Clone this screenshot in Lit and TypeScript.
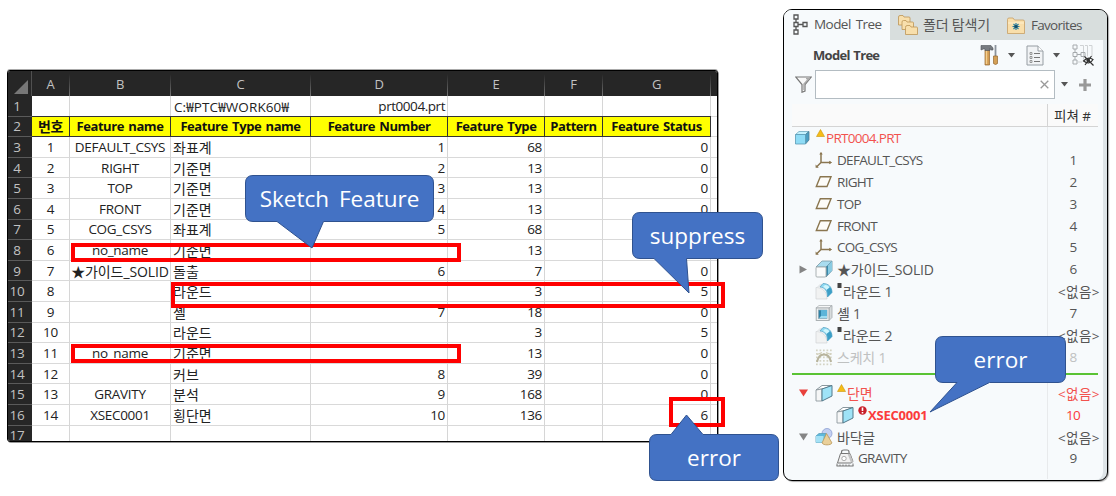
import { LitElement, css, html, nothing, svg } from "lit";
import { customElement, property } from "lit/decorators.js";
import { classMap } from "lit/directives/class-map.js";

const COLUMNS = ["A", "B", "C", "D", "E", "F", "G"];

const HEADINGS = [
  "번호",
  "Feature name",
  "Feature Type name",
  "Feature Number",
  "Feature Type",
  "Pattern",
  "Feature Status",
];

const ROWS = [
  ["1", "DEFAULT_CSYS", "좌표계", "1", "68", "", "0"],
  ["2", "RIGHT", "기준면", "2", "13", "", "0"],
  ["3", "TOP", "기준면", "3", "13", "", "0"],
  ["4", "FRONT", "기준면", "4", "13", "", "0"],
  ["5", "COG_CSYS", "좌표계", "5", "68", "", "0"],
  ["6", "no_name", "기준면", "", "13", "", "0"],
  ["7", "★가이드_SOLID", "돌출", "6", "7", "", "0"],
  ["8", "", "라운드", "", "3", "", "5"],
  ["9", "", "셸", "7", "18", "", "0"],
  ["10", "", "라운드", "", "3", "", "5"],
  ["11", "no_name", "기준면", "", "13", "", "0"],
  ["12", "", "커브", "8", "39", "", "0"],
  ["13", "GRAVITY", "분석", "9", "168", "", "0"],
  ["14", "XSEC0001", "횡단면", "10", "136", "", "6"],
];

const isKorean = (text: string) => /[가-힣]/.test(text);

interface TreeNode {
  icon: string;
  label: string;
  value: string;
  level: number;
  arrow?: "right" | "down";
  badge?: "warn" | "square" | "fail";
  tone?: "red" | "strong" | "faint";
}

const ABOVE: TreeNode[] = [
  { icon: "part", label: "PRT0004.PRT", value: "", level: 0, badge: "warn", tone: "red" },
  { icon: "csys", label: "DEFAULT_CSYS", value: "1", level: 1 },
  { icon: "plane", label: "RIGHT", value: "2", level: 1 },
  { icon: "plane", label: "TOP", value: "3", level: 1 },
  { icon: "plane", label: "FRONT", value: "4", level: 1 },
  { icon: "csys", label: "COG_CSYS", value: "5", level: 1 },
  { icon: "extrude", label: "★가이드_SOLID", value: "6", level: 1, arrow: "right" },
  { icon: "round", label: "라운드 1", value: "<없음>", level: 1, badge: "square" },
  { icon: "shell", label: "셸 1", value: "7", level: 1 },
  { icon: "round", label: "라운드 2", value: "<없음>", level: 1, badge: "square" },
  { icon: "sketch", label: "스케치 1", value: "8", level: 1, tone: "faint" },
];

const BELOW: TreeNode[] = [
  { icon: "section", label: "단면", value: "<없음>", level: 1, arrow: "down", badge: "warn", tone: "red" },
  { icon: "section", label: "XSEC0001", value: "10", level: 2, badge: "fail", tone: "strong" },
  { icon: "footer", label: "바닥글", value: "<없음>", level: 1, arrow: "down" },
  { icon: "gravity", label: "GRAVITY", value: "9", level: 2 },
];

// All tree icons are drawn on an 18x18 grid
const ICONS: Record<string, unknown> = {
  part: svg`
    <path d="M1.500 5.500 5 2.500h10L11.500 5.500z" fill="#c4f1fd" stroke="#6fa9bf" stroke-width=".8"/>
    <path d="M11.500 5.500l3.500-3v8.500l-3.500 4z" fill="#4a9ec2" stroke="#4a7f96" stroke-width=".8"/>
    <path d="M1.500 5.500h10V15h-10z" fill="#8fdcf6" stroke="#5b9ab5" stroke-width=".8"/>`,
  csys: svg`
    <path d="M6 2v9.500H16M6 11.500 1.500 16" fill="none" stroke="#8a7650" stroke-width="1.500"/>
    <path d="M4.300 3.500 6 .7l1.700 2.800zM14.200 9.700l3 1.800-3 1.800zM.6 13.600v3.200h3.200z" fill="#8a7650"/>`,
  plane: svg`<path d="M5.300 3.800H16l-4 9.700H1.300z" fill="#fdfcf8" stroke="#8a7650" stroke-width="1.400"/>`,
  extrude: svg`
    <path d="M1 7 7 1h10l-6 6z" fill="#a9dcef" stroke="#7b99a5" stroke-width=".8"/>
    <path d="M11 7l6-6v9.500L11 17z" fill="#398cae" stroke="#6b8f9f" stroke-width=".8"/>
    <path d="M13 5.200 17 1v9.500l-4 4z" fill="#8acbe2"/>
    <rect x="1" y="7" width="10" height="10" rx="1" fill="#fafbfb" stroke="#a2a9ac" stroke-width=".9"/>`,
  round: svg`
    <path d="M1 5.500C7 5.500 12 9 12 17H1z" fill="#f1f2f2" stroke="#d0d3d5" stroke-width=".7"/>
    <path d="M1.500 5.300 5 2h3l3 3z" fill="#e5e8ea"/>
    <path d="M5 5 8 1.500C13.500 1.500 17 5 17 10.500L12.500 15C12.500 9 10 5.500 5 5z" fill="#8fdaf3" stroke="#5da5c4" stroke-width=".8"/>
    <path d="M11.500 8 15 5c1.300 1.500 2 3.500 2 5.500L12.500 15c0-3 0-5-1-7z" fill="#3c9ec6"/>
    <path d="M8 5 10 3c2 .3 3.500 1.200 4.300 2.500L11.500 7.800Q10.300 5.800 8 5z" fill="#d0f6fd"/>`,
  shell: svg`
    <path d="M1 4 4 1.500h13L14 4z" fill="#f6f7f7" stroke="#b0b5b7" stroke-width=".8"/>
    <path d="M14 4l3-2.500v12l-3 3z" fill="#d8dcdd" stroke="#a4aaad" stroke-width=".8"/>
    <rect x="1.200" y="4" width="12.800" height="12.500" fill="#eef0f1" stroke="#a4aaad" stroke-width=".9"/>
    <rect x="3.500" y="6" width="8.500" height="8.500" fill="#2f83a8" stroke="#8ba4af" stroke-width=".7"/>
    <path d="M6 6h6v6H6z" fill="#5cb4d8"/>
    <path d="M4 14.300 6 12h6v2.300z" fill="#9edcf1"/>`,
  sketch: svg`
    <g fill="#d4d3c4">${[1, 4.500, 8, 11.500, 15].map((x) => [1.500, 5, 8.500, 12, 15.500].map((y) => svg`<rect x=${x} y=${y} width="1.700" height="1.700"/>`))}</g>
    <path d="M2 14C4 4 14 4 16 14" fill="none" stroke="#b8b49d" stroke-width="2"/>
    <path d="M2 6.500 7 4.500M11 4.500l5 2" stroke="#d2cfb9" stroke-width="1.300"/>`,
  section: svg`
    <path d="M1 6 7 1.500h10L9 4.500z" fill="#fff" stroke="#7c8b92" stroke-width=".9"/>
    <path d="M1 6l6-1v12H1z" fill="#f5f6f6" stroke="#8f9a9f" stroke-width=".9"/>
    <path d="M7 5 17 1.500V12L7 17z" fill="#9fe3f7" stroke="#53798a" stroke-width="1"/>`,
  footer: svg`
    <circle cx="12" cy="5.500" r="5" fill="#c3d0f2" stroke="#8c9fd2" stroke-width=".8"/>
    <path d="M1 8l3-2.500h7V12l-3 2.500H1z" fill="#5fb9dc" stroke="#5d9fba" stroke-width=".8"/>
    <path d="M1 8h7.500v6.500H1z" fill="#a4e1f5"/>
    <path d="M11.500 5.500 17 15c-1.500 2.500-8.500 2.500-10 0z" fill="#ead09a" stroke="#b99859" stroke-width=".8"/>`,
  gravity: svg`
    <path d="M5.500 5V3Q5.500 1 8 1h3q2 0 2 2v2" fill="none" stroke="#777" stroke-width="1.200"/>
    <path d="M4.500 4.500H14L17 12.500 15 14H1.500z" fill="#f2f2f2" stroke="#777" stroke-width="1"/>
    <path d="M11.500 4.800H14L17 12.500 15 13.800z" fill="#c4c4c4"/>
    <circle cx="8" cy="9.500" r="2.200" fill="#fff" stroke="#999" stroke-width=".8"/>
    <path d="M.5 17h17M1 14.500V17M4 15.500V17M7 15.500V17M10 15.500V17M13 15.500V17M17 14.500V17" stroke="#777" stroke-width="1"/>`,
};

@customElement("feature-sheet")
class FeatureSheet extends LitElement {
  renderCell(text: string, index: number) {
    return html`<div class=${classMap({ cell: true, center: index < 2, right: index > 2, ko: isKorean(text) })}>${text}</div>`;
  }

  render() {
    return html`
      <div class="sheet">
        <div class="corner">
          <svg width="14" height="14" viewBox="0 0 14 14"><path d="M14 0v14H0z" fill="#777" /></svg>
        </div>
        ${COLUMNS.map((name) => html`<div class="col-head">${name}</div>`)}
        <div class="col-head last"></div>

        <div class="row-head">1</div>
        <div class="cell"></div>
        <div class="cell"></div>
        <div class="cell path">C:₩PTC₩WORK60₩</div>
        <div class="cell right file">prt0004.prt</div>
        <div class="cell"></div>
        <div class="cell"></div>
        <div class="cell"></div>
        <div class="cell last"></div>

        <div class="row-head">2</div>
        ${HEADINGS.map((text) => html`<div class=${classMap({ cell: true, heading: true, ko: isKorean(text) })}>${text}</div>`)}
        <div class="cell last"></div>

        ${ROWS.map(
          (row, i) => html`
            <div class="row-head">${i + 3}</div>
            ${row.map((text, index) => this.renderCell(text, index))}
            <div class="cell last"></div>
          `
        )}

        <div class="row-head">17</div>
        ${COLUMNS.map(() => html`<div class="cell"></div>`)}
        <div class="cell last"></div>
      </div>
    `;
  }

  static styles = css`
    :host {
      display: block;
    }
    .sheet {
      box-sizing: border-box;
      width: 711px;
      height: 372px;
      overflow: hidden;
      border: 1px solid #000;
      border-radius: 3px;
      box-shadow: 1px 1px 0 #999, 0 -1px 0 #aaa;
      background: #fff;
      display: grid;
      grid-template-columns: 24px 38px 101px 140px 137px 97px 58px 108px 1fr;
      grid-template-rows: 25px repeat(17, 20.6px);
      font: 13.5px "Open Sans", "Noto Sans CJK KR", sans-serif;
      letter-spacing: -0.3px;
      color: #222;
    }
    .corner,
    .col-head,
    .row-head {
      background: #262626;
      color: #c2c2c2;
      display: flex;
      align-items: center;
      justify-content: center;
    }
    .corner {
      align-items: flex-end;
      justify-content: flex-end;
      padding: 0 3px 2px 0;
      border-right: 1px solid #505050;
    }
    .col-head {
      font-size: 13px;
      border-right: 1px solid #5c5c5c;
      border-image: linear-gradient(#262626 15%, #777) 1;
    }
    .row-head {
      padding-right: 6px;
      border-bottom: 1px solid #5a5a5a;
    }
    .cell {
      display: flex;
      align-items: center;
      box-sizing: border-box;
      min-width: 0;
      padding: 0 2px 0 3px;
      white-space: nowrap;
      border-right: 1px solid #d6d6d6;
      border-bottom: 1px solid #d9d9d9;
    }
    .center {
      justify-content: center;
      padding: 0;
    }
    .right {
      justify-content: flex-end;
    }
    .ko {
      font-size: 14px;
      letter-spacing: 0;
      padding-left: 2px;
    }
    .path {
      letter-spacing: 0.1px;
    }
    .file {
      letter-spacing: -0.45px;
    }
    .heading {
      justify-content: center;
      padding: 0;
      background: #ff0;
      color: #111;
      font-weight: 700;
      font-size: 13px;
      letter-spacing: -0.45px;
      word-spacing: 1.5px;
      border-color: #333;
      box-shadow: 0 -1px 0 #333;
    }
    .center.ko {
      letter-spacing: -0.1px;
      padding: 0;
    }
    .heading.ko {
      font-size: 14px;
    }
    .last {
      border-right: 0;
    }
  `;
}

@customElement("model-tree")
class ModelTree extends LitElement {
  renderBadge(kind?: string) {
    if (kind === "warn") {
      return html`<svg class="badge" width="10" height="8" viewBox="0 0 10 8">
        <path d="M4.500.5 8.500 7.500h-8z" fill="#f6bd16" stroke="#c9930c" stroke-width=".6" />
      </svg>`;
    }
    if (kind === "square") {
      return html`<svg class="badge" width="6" height="8" viewBox="0 0 6 8"><path d="M.5 1h4v5h-4z" fill="#444" /></svg>`;
    }
    if (kind === "fail") {
      return html`<svg class="badge" width="10" height="9" viewBox="0 0 10 9">
        <circle cx="4.500" cy="4.500" r="4.200" fill="#c8202a" />
        <path d="M4.500 1.500V5M4.500 6v1.500" stroke="#fff" stroke-width="1.600" />
      </svg>`;
    }
    return nothing;
  }

  renderArrow(direction?: string, red = false) {
    if (!direction) return nothing;
    const d = direction === "right" ? "M.5.5 8 4.500.5 8.500z" : "M0 1.500h9L4.500 8.500z";
    return html`<svg width="9" height="9" viewBox="0 0 9 9"><path d=${d} fill=${red ? "#e8413c" : "#858585"} /></svg>`;
  }

  renderNode(node: TreeNode) {
    const tone = node.tone ?? "plain";
    return html`
      <div class="node ${tone}">
        <div class="lead level${node.level}">${this.renderArrow(node.arrow, tone === "red")}</div>
        <svg class="icon" width="18" height="18" viewBox="0 0 18 18">${ICONS[node.icon]}</svg>
        ${this.renderBadge(node.badge)}
        <span class=${classMap({ label: true, ko: isKorean(node.label) })}>${node.label}</span>
        <span class=${classMap({ value: true, none: isKorean(node.value) })}>${node.value}</span>
      </div>
    `;
  }

  renderCaret() {
    return html`<svg class="caret" width="7" height="5" viewBox="0 0 7 5"><path d="M0 0h7L3.500 4.500z" fill="#555" /></svg>`;
  }

  render() {
    return html`
      <div class="panel">
        <div class="tabs">
          <div class="tab active">
            <svg width="15" height="21" viewBox="0 0 15 21" fill="none" stroke="#555" stroke-width="1.300">
              <path d="M1 1h4v4H1zM1 8.500h4v4H1zM1 16h4v4H1zM10 8.500h4v4h-4zM3 5v3.500M3 12.500V16M5 10.500h5" />
            </svg>
            <span>Model Tree</span>
          </div>
          <div class="tab folders">
            <svg width="20" height="20" viewBox="0 0 20 20" fill="#f8dfac" stroke="#bd9556" stroke-width=".8">
              <path d="M.5 2Q.5.5 2 .5h3l1 1.500h5q1 0 1 1V10H.5z" />
              <path d="M4 7Q4 5.500 5.500 5.500H8L9 7h5.500q1 0 1 1v6.500H4z" />
              <path d="M7.500 12.500Q7.500 10.500 9 10.500h3L13 12h5.500q1 0 1 1v6.500h-12z" />
            </svg>
            <span class="ko">폴더 탐색기</span>
          </div>
          <div class="tab favorites">
            <svg width="18" height="17" viewBox="0 0 18 17">
              <path d="M.5 2.500Q.5 1 2 1h4l1.500 2H16q1.500 0 1.500 1.500v12H.5z" fill="#f9dfab" stroke="#c6a064" stroke-width=".8" />
              <path d="M1 6h16" stroke="#fff0cd" />
              <path d="M9 6v7M5.500 9.500h7M6.500 7l5 5M11.500 7l-5 5" stroke="#277f9e" stroke-width="1.200" />
              <circle cx="9" cy="9.500" r="1.600" fill="#174d68" />
            </svg>
            <span>Favorites</span>
          </div>
        </div>

        <div class="title-bar">
          <span class="title">Model Tree</span>
          <svg width="19" height="22" viewBox="0 0 19 22">
            <path d="M5 6h4.500v15H5z" fill="#d39c52" stroke="#94662f" stroke-width=".7" />
            <path d="M6.500 6.500V20" stroke="#f4cf90" stroke-width="1.400" />
            <path d="M1 1.500h10l2 2.500v2h-2L10 4.500V6.500H5V5H3.500L1 6z" fill="#777b80" stroke="#4f5357" stroke-width=".6" />
            <path d="M15.500 1v11" stroke="#8b929b" stroke-width="1.800" />
            <path d="M13.500 12h4v7.500q-2 2-4 0z" fill="#d4a056" stroke="#94662f" stroke-width=".7" />
          </svg>
          ${this.renderCaret()}
          <svg class="list" width="18" height="21" viewBox="0 0 18 21">
            <path d="M1 1h11l5 5v14H1z" fill="#f1f3f5" stroke="#969da3" />
            <path d="M12 1v5h5" fill="#fff" stroke="#969da3" />
            <path d="M8 8.500h6M8 12.500h6M8 16.500h6" stroke="#777" />
            <path d="M4 7.500h2v2H4zM4 11.500h2v2H4zM4 15.500h2v2H4z" fill="none" stroke="#777" stroke-width=".7" />
          </svg>
          ${this.renderCaret()}
          <svg class="hide" width="22" height="22" viewBox="0 0 22 22" fill="none">
            <path d="M8 1.500h3.500v14M13 1.500h2.500v11M17 1.500h3v11M6 18h4" stroke="#cfd2d4" />
            <path d="M1 1h4v4H1zM1 8.500h4v4H1zM1 16h4v4H1zM9 8.500h4v4H9zM3 5v3.500M3 12.500V16M5 10.500h4" stroke="#a6aaad" />
            <path d="M11.500 17q4.500-5 9.500-1.500-3.500 6-9.500 1.500z" stroke="#333" stroke-width="1.200" />
            <circle cx="16.200" cy="16.200" r="1.700" fill="#333" />
            <path d="M12.500 12.500 21.500 21.500M19.500 12l-6.500 9" stroke="#333" stroke-width="1.200" />
          </svg>
        </div>

        <div class="search">
          <svg width="17" height="17" viewBox="0 0 17 17">
            <path d="M.7 1h15.600L10 8.500V15l-3 1.200V8.500z" fill="#f8f8f8" stroke="#777" stroke-width="1.200" />
            <path d="M11 2.500h3L9 8v6" fill="none" stroke="#aaa" stroke-width="1.500" />
          </svg>
          <div class="field">
            <svg width="9" height="9" viewBox="0 0 9 9"><path d="M.7.7l7.600 7.600M8.300.7.7 8.300" stroke="#999" stroke-width="1.300" /></svg>
          </div>
          ${this.renderCaret()}
          <svg class="plus" width="12" height="12" viewBox="0 0 12 12"><path d="M6 0v12M0 6h12" stroke="#999" stroke-width="3.200" /></svg>
        </div>

        <div class="tree">
          <div class="tree-head"><span></span><span class="col">피쳐 #</span></div>
          <div class="nodes">
            ${ABOVE.map((node) => this.renderNode(node))}
            <div class="insert-line"></div>
            ${BELOW.map((node) => this.renderNode(node))}
          </div>
        </div>
      </div>
    `;
  }

  static styles = css`
    :host {
      display: block;
    }
    svg {
      display: block;
      flex: none;
    }
    .panel {
      box-sizing: border-box;
      width: 325px;
      height: 472px;
      border: 1.5px solid #000;
      border-radius: 9px;
      overflow: hidden;
      background: #f7fafc;
      box-shadow: 1px 1px 1px #aaa, inset -4px 0 0 #dee4e7;
      font: 13.5px "Open Sans", "Noto Sans CJK KR", sans-serif;
      letter-spacing: -0.7px;
      color: #555;
    }
    .ko {
      font-size: 14px;
      letter-spacing: -0.2px;
    }
    .tabs {
      display: flex;
      height: 30px;
      background: #d8dedd;
    }
    .tab {
      display: flex;
      align-items: center;
      white-space: nowrap;
    }
    .active {
      box-sizing: border-box;
      width: 106px;
      padding: 0 0 2px 9px;
      gap: 6px;
      background: #f7fafc;
      letter-spacing: -0.55px;
      word-spacing: 2px;
    }
    .folders {
      width: 108px;
      padding-left: 8px;
      gap: 5px;
      box-sizing: border-box;
    }
    .folders .ko {
      padding-bottom: 2px;
    }
    .favorites {
      padding-left: 9px;
      gap: 6px;
    }
    .title-bar {
      display: flex;
      align-items: center;
      height: 30px;
      padding-left: 29px;
    }
    .title {
      width: 167px;
      font-size: 13px;
      font-weight: 700;
      word-spacing: 1px;
      color: #444;
    }
    .title-bar .caret {
      margin-left: 9px;
    }
    .list {
      margin-left: 11px;
    }
    .hide {
      margin-left: 12px;
    }
    .search {
      display: flex;
      align-items: center;
      height: 29px;
      padding-left: 11px;
    }
    .field {
      box-sizing: border-box;
      width: 240px;
      height: 29px;
      margin: 0 6px 0 3px;
      padding-right: 5px;
      display: flex;
      align-items: center;
      justify-content: flex-end;
      background: #fff;
      border: 1px solid #b3bcc2;
    }
    .plus {
      margin-left: 11px;
    }
    .tree {
      margin: 5px 0 0 8px;
      width: 306px;
    }
    .tree-head {
      display: grid;
      grid-template-columns: 1fr 51px;
      height: 22px;
      background: #fafafa;
      border-bottom: 1px solid #d4d4d4;
      color: #333;
      letter-spacing: 0;
    }
    .col {
      display: flex;
      align-items: center;
      border-left: 1px solid #d4d4d4;
      padding-left: 6px;
      white-space: nowrap;
    }
    .nodes {
      height: 352px;
      background: linear-gradient(#e8eaec, #e8eaec) 255px 0 / 1px 100% no-repeat;
    }
    .node {
      display: flex;
      align-items: center;
      height: 21.900px;
      white-space: nowrap;
    }
    .lead {
      display: flex;
      justify-content: flex-end;
      box-sizing: border-box;
      padding-right: 7px;
      flex: none;
    }
    .level0 {
      width: 2px;
      padding: 0;
    }
    .level1 {
      width: 23px;
    }
    .level2 {
      width: 44px;
    }
    .icon {
      margin-right: 4px;
    }
    .badge {
      align-self: flex-start;
      margin-top: 2px;
    }
    .label {
      flex: 1;
    }
    .value {
      width: 30px;
      margin-right: 10px;
      text-align: center;
    }
    .none {
      width: 40px;
      margin-right: 0;
      letter-spacing: 0.4px;
    }
    .red {
      color: #f2524e;
    }
    .strong {
      color: #fb3b3b;
    }
    .strong .label {
      font-size: 13px;
      font-weight: 700;
      letter-spacing: -0.2px;
    }
    .faint {
      color: #bfc1c1;
    }
    .insert-line {
      height: 2px;
      margin: 5px 0 7px;
      background: #5ac334;
    }
  `;
}

@customElement("callout-note")
class CalloutNote extends LitElement {
  @property() text = "";
  @property() shape = "";
  @property({ type: Number }) w = 131;
  @property({ type: Number }) h = 47;

  render() {
    return html`
      <svg width=${this.w} height=${this.h}>
        <path d=${this.shape} fill="#4472c4" stroke="#2f528f" stroke-width="1" />
      </svg>
      <div class="text">${this.text}</div>
    `;
  }

  static styles = css`
    :host {
      position: absolute;
      height: 47px;
    }
    svg {
      display: block;
      overflow: visible;
    }
    .text {
      position: absolute;
      inset: 0;
      height: 47px;
      display: flex;
      align-items: center;
      justify-content: center;
      font: 22.5px "Open Sans", sans-serif;
      word-spacing: 4px;
      color: #fff;
      white-space: nowrap;
    }
  `;
}

@customElement("app-root")
class AppRoot extends LitElement {
  render() {
    return html`
      <feature-sheet></feature-sheet>
      <model-tree></model-tree>

      <div class="mark row8"></div>
      <div class="mark row10"></div>
      <div class="mark row13"></div>
      <div class="mark status"></div>

      <callout-note
        class="sketch"
        .w=${189}
        text="Sketch Feature"
        shape="M8 .5H181q7.500 0 7.500 7.500V39q0 7.500-7.500 7.500H78.500L67 73 32 46.500H8Q.5 46.500.5 39V8Q.5.5 8 .5z"
      ></callout-note>
      <callout-note
        class="suppress"
        text="suppress"
        shape="M8 .5H123q7.500 0 7.500 7.500V39q0 7.500-7.500 7.500H54.500L57 81 22 46.500H8Q.5 46.500.5 39V8Q.5.5 8 .5z"
      ></callout-note>
      <callout-note
        class="error-cell"
        text="error"
        shape="M8 .5H22L37.500-19 54 .5H122q7.500 0 7.500 7.500V39q0 7.500-7.500 7.500H8Q.5 46.500.5 39V8Q.5.5 8 .5z"
      ></callout-note>
      <callout-note
        class="error-node"
        text="error"
        shape="M8 .5H123q7.500 0 7.500 7.500V39q0 7.500-7.500 7.500H54.500L-5 76 22 46.500H8Q.5 46.500.5 39V8Q.5.5 8 .5z"
      ></callout-note>
    `;
  }

  static styles = css`
    :host {
      position: relative;
      display: flex;
      align-items: flex-start;
      gap: 65px;
      box-sizing: border-box;
      width: 1116px;
      height: 496px;
      padding: 9px 0 0 7px;
      overflow: hidden;
      background: #fff;
    }
    feature-sheet {
      margin-top: 61px;
    }
    .mark {
      position: absolute;
      box-sizing: border-box;
      border: 4px solid #f00;
    }
    .row8,
    .row13 {
      left: 71px;
      width: 390px;
      height: 19px;
    }
    .row8 {
      top: 243px;
    }
    .row13 {
      top: 344px;
    }
    .row10 {
      left: 171px;
      top: 282px;
      width: 554px;
      height: 26px;
    }
    .status {
      left: 669px;
      top: 397px;
      width: 56px;
      height: 30px;
    }
    .sketch {
      left: 245px;
      top: 175px;
      width: 189px;
    }
    .suppress {
      left: 632px;
      top: 212px;
      width: 131px;
    }
    .error-cell {
      left: 649px;
      top: 434px;
      width: 130px;
    }
    .error-node {
      left: 935px;
      top: 336px;
      width: 131px;
    }
  `;
}
